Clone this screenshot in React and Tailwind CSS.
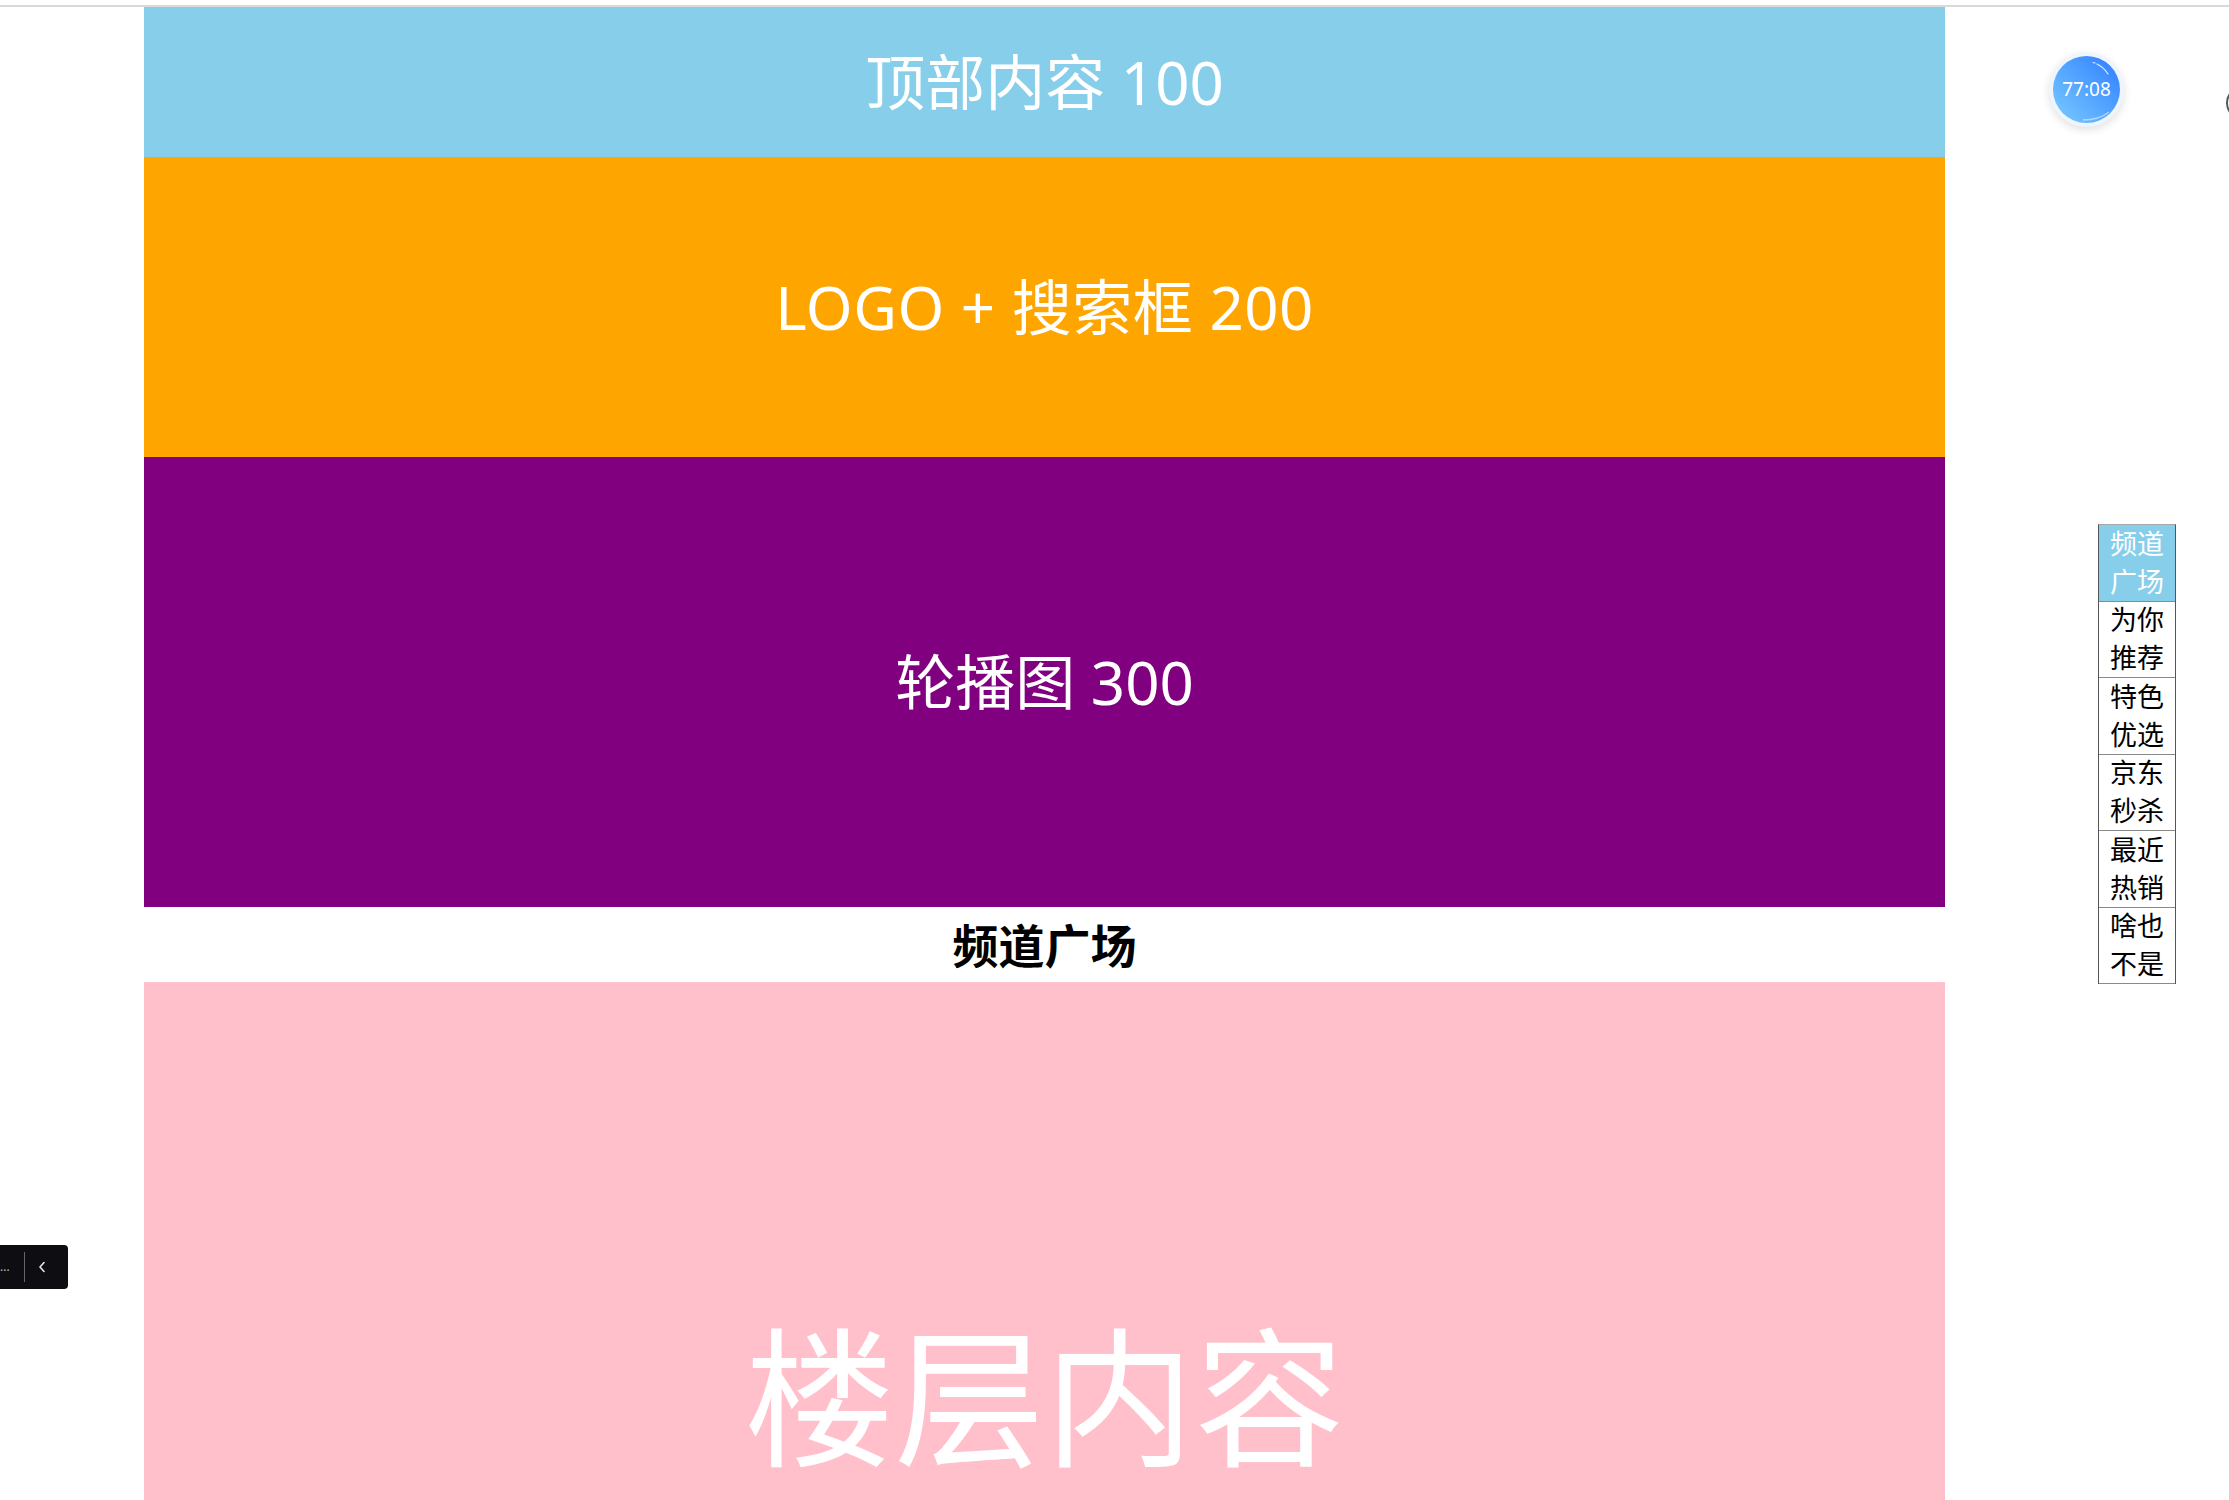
export default function App() {
  const font = { fontFamily: '"Noto Sans", "Noto Sans CJK SC", sans-serif' };
  const nav = [
    ["频道", "广场"],
    ["为你", "推荐"],
    ["特色", "优选"],
    ["京东", "秒杀"],
    ["最近", "热销"],
    ["啥也", "不是"],
  ];
  return (
    <div className="relative w-[2229px] h-[1500px] overflow-hidden bg-white" style={font}>
      <div className="h-[5px]" />
      <div className="h-[2px] bg-[#d9d9d9]" />
      <div className="ml-[144px] w-[1801px] flex flex-col">
        <div className="h-[150px] bg-[#87ceeb] flex items-center justify-center text-white text-[60px] leading-none">
          顶部内容 100
        </div>
        <div className="h-[300px] bg-[#ffa500] flex items-center justify-center text-white text-[60px] leading-none tracking-[0.5px]">
          LOGO + 搜索框 200
        </div>
        <div className="h-[450px] bg-[#800080] flex items-center justify-center text-white text-[60px] leading-none">
          轮播图 300
        </div>
        <div className="h-[75px] flex items-center justify-center text-black text-[46px] font-bold leading-none">
          频道广场
        </div>
        <div className="h-[600px] bg-[#ffc0cb] flex justify-center">
          <div className="mt-[340px] text-white text-[150px] leading-none">楼层内容</div>
        </div>
      </div>

      {/* timer */}
      <div className="absolute left-[2049px] top-[52px] w-[75px] h-[75px] rounded-full bg-[#eef5fd] shadow-[0_3px_8px_rgba(0,0,0,0.12)] flex items-center justify-center">
        <div className="relative w-[67px] h-[67px] rounded-full bg-gradient-to-tr from-[#7ccbff] to-[#2f7bff] flex items-center justify-center">
          <svg className="absolute inset-0" width="67" height="67" viewBox="0 0 67 67">
            <path d="M44 8 A28 28 0 0 1 55 18" fill="none" stroke="white" strokeOpacity="0.8" strokeWidth="1.2" strokeLinecap="round" />
            <path d="M40 6.5 L42 7" fill="none" stroke="white" strokeOpacity="0.8" strokeWidth="1.2" strokeLinecap="round" />
            <path d="M30 64 Q46 64 56 56" fill="none" stroke="white" strokeOpacity="0.5" strokeWidth="1.5" />
          </svg>
          <span className="relative text-white text-[19px] leading-none">77:08</span>
        </div>
      </div>

      {/* right-edge partial circle */}
      <div className="absolute left-[2226px] top-[86px] w-[34px] h-[34px] rounded-full border-2 border-[#555]" />

      {/* side nav */}
      <div className="absolute left-[2098px] top-[524px] w-[78px] border-t border-t-[#a8a8a8] border-x border-x-[#555]">
        {nav.map((n, i) => (
          <div
            key={i}
            className={
              "h-[76.5px] border-b border-b-[#8a8a8a] flex flex-col items-center justify-center text-[27px] leading-[38px] " +
              (i === 0 ? "bg-[#87ceeb] text-white" : "bg-white text-black")
            }
          >
            <span>{n[0]}</span>
            <span>{n[1]}</span>
          </div>
        ))}
      </div>

      {/* bottom-left dark pill */}
      <div className="absolute left-0 top-[1245px] w-[68px] h-[44px] bg-[#0e0e12] rounded-r-[4px] flex items-center">
        <span className="text-[#bbb] text-[12px] leading-none w-[12px]">...</span>
        <div className="ml-[12px] w-[1px] h-[30px] bg-[#666]" />
        <svg className="ml-[13px]" width="8" height="12" viewBox="0 0 8 12">
          <path d="M6 1.5 L2 6 L6 10.5" fill="none" stroke="#e5e5e5" strokeWidth="1.6" strokeLinecap="round" strokeLinejoin="round" />
        </svg>
      </div>
    </div>
  );
}
